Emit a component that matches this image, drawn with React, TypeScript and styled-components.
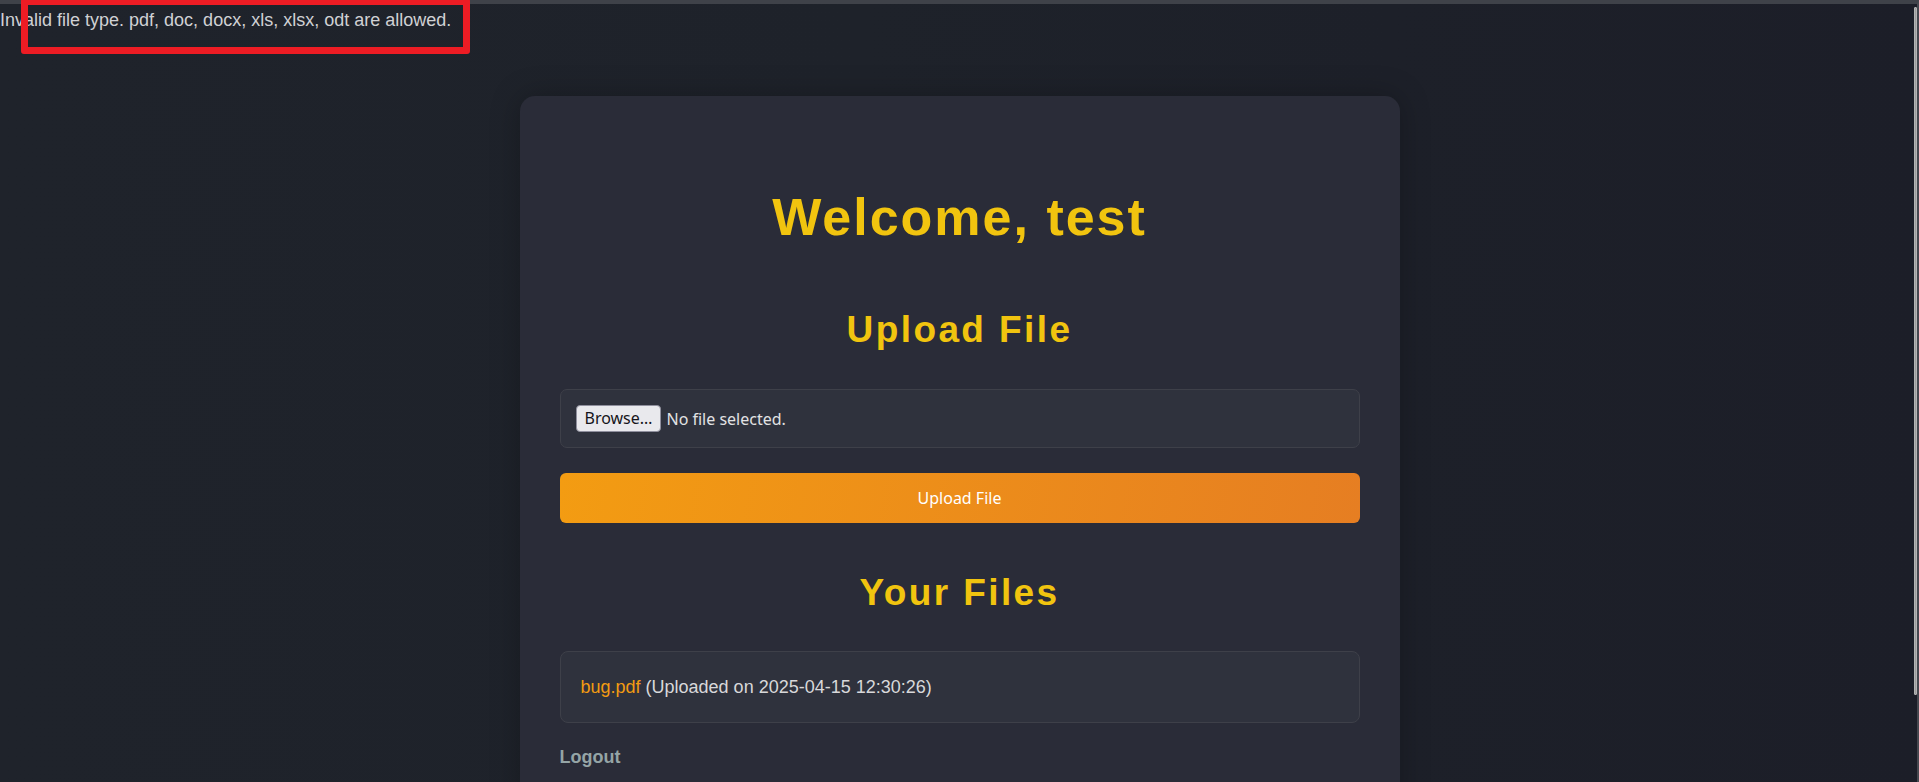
import React from "react";
import styled, { createGlobalStyle } from "styled-components";

const GlobalStyle = createGlobalStyle`
  html, body {
    margin: 0;
    padding: 0;
    height: 100%;
    overflow: hidden;
  }
  body {
    background: linear-gradient(90deg, #1f232b 0%, #1e222a 45%, #1c1e28 100%);
    font-family: "Liberation Sans", Arial, sans-serif;
    color: #d4d4d4;
  }
  #root {
    min-height: 100%;
  }
`;

const Page = styled.div`
  position: relative;
  min-height: 100vh;
`;

const WindowFrame = styled.div`
  position: fixed;
  inset: 0;
  border-top: 4px solid #3f4249;
  border-right: 2px solid #46484f;
  pointer-events: none;
  z-index: 5;
`;

const ScrollThumb = styled.div`
  position: fixed;
  top: 7px;
  right: 2px;
  width: 3px;
  height: 688px;
  background: #9c9c9c;
  border: 1px solid #b4b4b4;
  box-sizing: border-box;
  border-radius: 1px;
  z-index: 6;
`;

const Annotation = styled.div`
  position: absolute;
  top: -2px;
  left: 21px;
  width: 449px;
  height: 56px;
  box-sizing: border-box;
  border: 7px solid #ed1c24;
  border-radius: 3px;
  z-index: 10;
`;

const Flash = styled.div`
  padding-top: 10px;
  font-size: 18px;
  line-height: 21px;
  color: #d0d1d4;
  white-space: nowrap;
`;

const Card = styled.main`
  width: 880px;
  box-sizing: border-box;
  margin: 65px auto 0;
  padding: 40px 40px 40px;
  background: #2a2c38;
  border-radius: 15px;
  box-shadow: 0 0 30px rgba(0, 0, 0, 0.25);
`;

const Title = styled.h1`
  margin: 51px 0 0;
  font-size: 52px;
  line-height: 60px;
  font-weight: bold;
  letter-spacing: 2px;
  text-align: center;
  color: #f1c40f;
`;

const SectionTitle = styled.h2<{ $top: number; $bottom: number }>`
  margin: ${(p) => p.$top}px 0 ${(p) => p.$bottom}px;
  font-size: 37px;
  line-height: 42px;
  font-weight: bold;
  letter-spacing: 2.4px;
  text-align: center;
  color: #f1c40f;
`;

const FileField = styled.div`
  display: flex;
  align-items: center;
  gap: 5px;
  padding: 15px;
  background: #2f323d;
  border: 1px solid #3e4049;
  border-radius: 7px;
`;

const BrowseButton = styled.button`
  height: 27px;
  box-sizing: border-box;
  padding: 0 8px;
  background: #e9e9ed;
  border: 1px solid #8f8f9d;
  border-radius: 4px;
  font-family: "Noto Sans", sans-serif;
  font-size: 16px;
  color: #15141a;
  line-height: 25px;
`;

const FileStatus = styled.span`
  font-family: "Noto Sans", sans-serif;
  font-size: 16px;
  color: #e2e2e4;
`;

const UploadButton = styled.button`
  display: block;
  width: 100%;
  height: 50px;
  margin-top: 25px;
  border: none;
  border-radius: 6px;
  background: linear-gradient(100deg, #f39c12 0%, #e67e22 100%);
  color: #ffffff;
  font-family: "Noto Sans", sans-serif;
  font-size: 16px;
`;

const FileList = styled.ul`
  list-style: none;
  margin: 0;
  padding: 0;
`;

const FileItem = styled.li`
  padding: 25px 20px;
  font-size: 18px;
  line-height: 20px;
  color: #d8d8da;
  background: #2f323d;
  border: 1px solid #3e4049;
  border-radius: 8px;
`;

const FileLink = styled.a`
  color: #f39c12;
  text-decoration: none;
`;

const LogoutLink = styled.a`
  display: block;
  margin-top: 24px;
  font-size: 18px;
  line-height: 21px;
  font-weight: bold;
  color: #95a5a6;
  text-decoration: none;
`;

export default function App() {
  return (
    <>
      <GlobalStyle />
      <Page>
        <Flash>Invalid file type. pdf, doc, docx, xls, xlsx, odt are allowed.</Flash>
        <Annotation />
        <Card>
          <Title>Welcome, test</Title>
          <SectionTitle $top={62} $bottom={38}>
            Upload File
          </SectionTitle>
          <FileField>
            <BrowseButton type="button">Browse…</BrowseButton>
            <FileStatus>No file selected.</FileStatus>
          </FileField>
          <UploadButton type="button">Upload File</UploadButton>
          <SectionTitle $top={49} $bottom={37}>
            Your Files
          </SectionTitle>
          <FileList>
            <FileItem>
              <FileLink href="#">bug.pdf</FileLink> (Uploaded on 2025-04-15 12:30:26)
            </FileItem>
          </FileList>
          <LogoutLink href="#">Logout</LogoutLink>
        </Card>
      </Page>
      <WindowFrame />
      <ScrollThumb />
    </>
  );
}
